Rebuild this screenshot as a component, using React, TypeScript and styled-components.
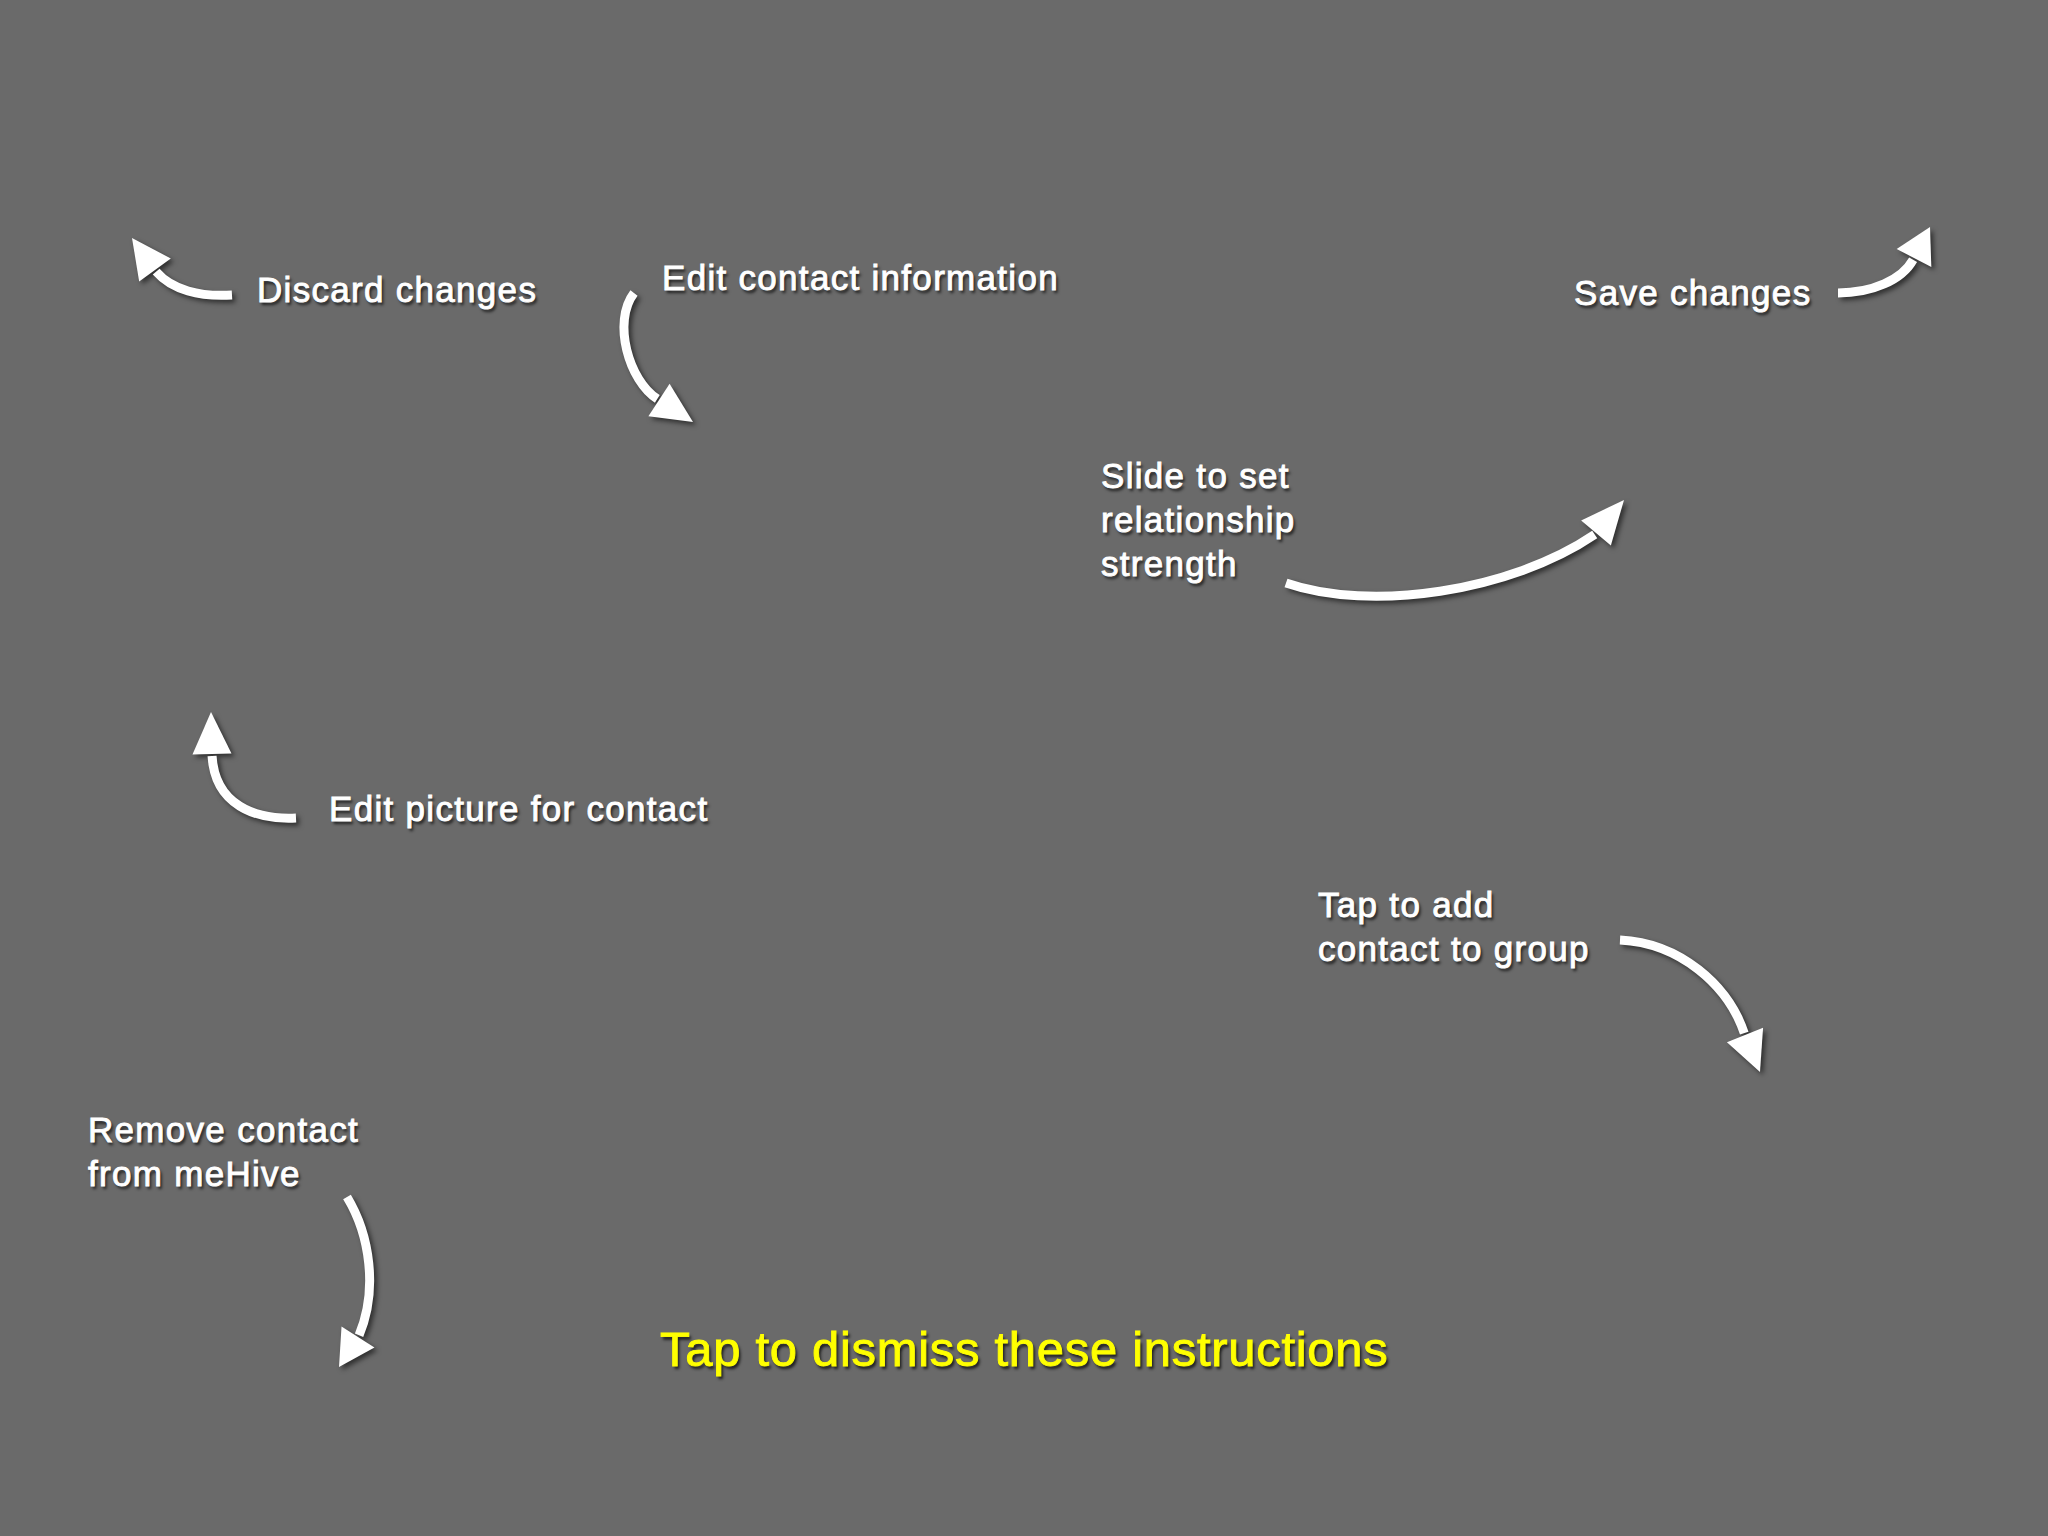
import React from "react";
import styled, { createGlobalStyle } from "styled-components";

const Global = createGlobalStyle`
  html, body { margin: 0; padding: 0; background: #6a6a6a; }
  #root { width: 2048px; height: 1536px; }
`;

const Overlay = styled.main`
  position: relative;
  width: 2048px;
  height: 1536px;
  overflow: hidden;
  background: #6a6a6a;
  font-family: "Liberation Sans", Arial, Helvetica, sans-serif;
`;

const ArrowLayer = styled.svg`
  position: absolute;
  inset: 0;
  width: 2048px;
  height: 1536px;
  filter: drop-shadow(3px 3px 2.5px rgba(0, 0, 0, 0.55));
`;

const Hint = styled.p<{ $x: number; $y: number }>`
  position: absolute;
  left: ${(p) => p.$x}px;
  top: ${(p) => p.$y}px;
  margin: 0;
  color: #ffffff;
  font-size: 35px;
  font-weight: 400;
  line-height: 44px;
  letter-spacing: 1.3px;
  white-space: nowrap;
  -webkit-text-stroke: 0.9px #ffffff;
  text-shadow: 2px 3px 3px rgba(0, 0, 0, 0.7);
`;

const Dismiss = styled.p`
  position: absolute;
  left: 660px;
  top: 1321px;
  margin: 0;
  color: #ffff00;
  font-size: 49px;
  line-height: 56px;
  letter-spacing: 0.7px;
  white-space: nowrap;
  -webkit-text-stroke: 0.9px #ffff00;
  text-shadow: 2px 3px 3px rgba(0, 0, 0, 0.75);
`;

type Pt = [number, number];

interface ArrowSpec {
  p0: Pt;
  c1: Pt;
  c2: Pt;
  p3: Pt;
  tip: Pt;
}

const Arrow: React.FC<ArrowSpec> = ({ p0, c1, c2, p3, tip }) => {
  const dx = tip[0] - p3[0];
  const dy = tip[1] - p3[1];
  const len = Math.hypot(dx, dy);
  const nx = -dy / len;
  const ny = dx / len;
  const hw = 19.5;
  const a: Pt = [p3[0] + nx * hw, p3[1] + ny * hw];
  const b: Pt = [p3[0] - nx * hw, p3[1] - ny * hw];
  const back: Pt = [p3[0] - (dx / len) * 2, p3[1] - (dy / len) * 2];
  return (
    <g>
      <path
        d={`M${p0[0]} ${p0[1]} C${c1[0]} ${c1[1]} ${c2[0]} ${c2[1]} ${back[0]} ${back[1]}`}
        fill="none"
        stroke="#ffffff"
        strokeWidth={9}
        strokeLinecap="butt"
      />
      <polygon points={`${tip[0]},${tip[1]} ${a[0]},${a[1]} ${b[0]},${b[1]}`} fill="#ffffff" />
    </g>
  );
};

const arrows: ArrowSpec[] = [
  { p0: [232, 295], c1: [200, 297], c2: [172, 290], p3: [155, 270], tip: [132, 238] },
  { p0: [634, 293], c1: [612, 322], c2: [629, 381], p3: [659, 400], tip: [693, 422] },
  { p0: [1838, 293], c1: [1872, 293], c2: [1902, 280], p3: [1914, 258], tip: [1930, 227] },
  { p0: [1286, 583], c1: [1370, 612], c2: [1510, 592], p3: [1596, 533], tip: [1624, 500] },
  { p0: [296, 818], c1: [255, 820], c2: [215, 805], p3: [212, 754], tip: [211, 712] },
  { p0: [1620, 940], c1: [1680, 943], c2: [1728, 985], p3: [1745, 1035], tip: [1760, 1072] },
  { p0: [347, 1197], c1: [370, 1235], c2: [378, 1290], p3: [358, 1337], tip: [339, 1367] },
];

const hints: { x: number; y: number; lines: string[] }[] = [
  { x: 257, y: 268, lines: ["Discard changes"] },
  { x: 662, y: 256, lines: ["Edit contact information"] },
  { x: 1574, y: 271, lines: ["Save changes"] },
  { x: 1101, y: 454, lines: ["Slide to set", "relationship", "strength"] },
  { x: 329, y: 787, lines: ["Edit picture for contact"] },
  { x: 1318, y: 883, lines: ["Tap to add", "contact to group"] },
  { x: 88, y: 1108, lines: ["Remove contact", "from meHive"] },
];

export default function App() {
  return (
    <>
      <Global />
      <Overlay>
        <ArrowLayer viewBox="0 0 2048 1536">
          {arrows.map((a, i) => (
            <Arrow key={i} {...a} />
          ))}
        </ArrowLayer>
        {hints.map((h) => (
          <Hint key={h.lines[0]} $x={h.x} $y={h.y}>
            {h.lines.map((l, i) => (
              <React.Fragment key={l}>
                {i > 0 && <br />}
                {l}
              </React.Fragment>
            ))}
          </Hint>
        ))}
        <Dismiss>Tap to dismiss these instructions</Dismiss>
      </Overlay>
    </>
  );
}
